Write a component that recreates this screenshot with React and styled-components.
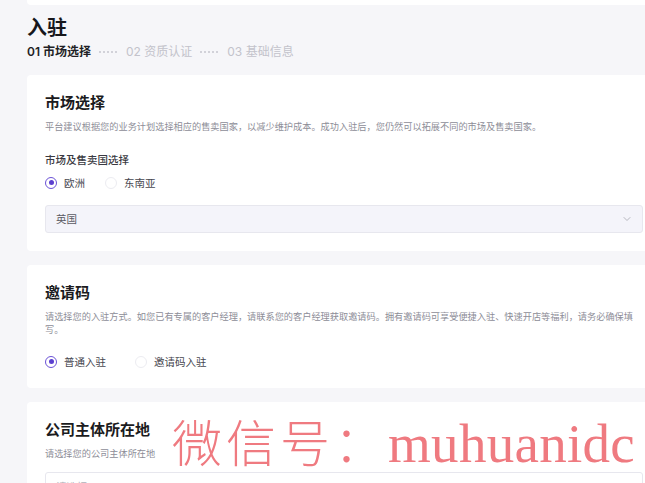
import React from "react";
import styled, { createGlobalStyle } from "styled-components";
import { ChevronDown } from "lucide-react";

const GlobalStyle = createGlobalStyle`
    html, body {
        margin: 0;
        padding: 0;
        background: #f6f6f9;
        overflow: hidden;
    }
    body {
        font-family: Inter, "Noto Sans CJK SC", sans-serif;
        color: #1f1f24;
    }
`;

const Page = styled.div`
    position: relative;
    width: 645px;
    height: 483px;
    overflow: hidden;
`;

const Column = styled.div`
    margin-left: 27px;
    width: 634px;
`;

const TopStub = styled.div`
    height: 5px;
    background: #fff;
    border-radius: 0 0 4px 4px;
`;

const Title = styled.h1`
    margin: 11px 0 0;
    font-size: 20px;
    line-height: 24px;
    font-weight: 700;
    color: #17171c;
`;

const Steps = styled.div`
    display: flex;
    align-items: center;
    margin-top: 4px;
    height: 16px;
`;

const Step = styled.span`
    font-size: 12px;
    line-height: 16px;
    font-weight: ${(p) => (p.$active ? 600 : 400)};
    color: ${(p) => (p.$active ? "#1f1f26" : "#c3c3cb")};
`;

const Dots = styled.span`
    width: 21px;
    height: 2px;
    margin: 0 7px;
    background: radial-gradient(circle, #d2d2d9 0.9px, transparent 1.1px) 0 0 / 4px 2px repeat-x;
`;

const Cards = styled.div`
    display: flex;
    flex-direction: column;
    gap: 14px;
    margin-top: 15px;
`;

const Card = styled.section`
    background: #fff;
    border-radius: 4px;
    padding: 18px 18px 18px;
`;

const CardTitle = styled.h2`
    margin: 0;
    font-size: 15px;
    line-height: 20px;
    font-weight: 700;
    color: #1b1b20;
`;

const Desc = styled.p`
    margin: 7px 0 0;
    font-size: 9.2px;
    line-height: 13.5px;
    color: #8d8d97;
`;

const Label = styled.div`
    margin-top: 19px;
    font-size: 10.5px;
    line-height: 15px;
    font-weight: 500;
    color: #3a3a42;
`;

const RadioRow = styled.div`
    display: flex;
    align-items: center;
    gap: ${(p) => p.$gap}px;
    margin-top: ${(p) => p.$top}px;
    height: 16px;
`;

const Option = styled.label`
    display: flex;
    align-items: center;
    gap: 7px;
    font-size: 10.5px;
    color: #47474f;
`;

const Circle = styled.span`
    box-sizing: border-box;
    width: 12px;
    height: 12px;
    border-radius: 50%;
    border: 1px solid ${(p) => (p.$checked ? "#6b52d6" : "#ececf1")};
    display: flex;
    align-items: center;
    justify-content: center;

    &::after {
        content: "";
        width: 5px;
        height: 5px;
        border-radius: 50%;
        background: ${(p) => (p.$checked ? "#5b40cf" : "transparent")};
    }
`;

const Select = styled.div`
    box-sizing: border-box;
    display: flex;
    align-items: center;
    justify-content: space-between;
    height: 28px;
    margin-top: ${(p) => p.$top}px;
    padding: 0 9px 0 10px;
    border: 1px solid #e7e7ee;
    border-radius: 3px;
    background: ${(p) => (p.$filled ? "#f4f4fa" : "#fff")};
    font-size: 10.5px;
    color: ${(p) => (p.$filled ? "#5a5a63" : "#b0b0b8")};

    svg {
        color: #a6a6ae;
    }
`;

const Watermark = styled.div`
    position: absolute;
    left: 172px;
    top: 413px;
    display: flex;
    align-items: baseline;
    line-height: 54px;
    color: #ef7a80;
    white-space: nowrap;
    pointer-events: none;
`;

const MarkCjk = styled.span`
    font-family: "Noto Sans CJK SC", sans-serif;
    font-weight: 300;
    font-size: 50px;
    letter-spacing: 4px;
`;

const MarkLatin = styled.span`
    font-family: "Liberation Serif", serif;
    font-size: 55px;
    letter-spacing: 0.3px;
`;

const Radio = ({ checked, children }) => (
    <Option>
        <Circle $checked={checked} />
        {children}
    </Option>
);

export default function App() {
    return (
        <Page>
            <GlobalStyle />
            <Column>
                <TopStub />
                <Title>入驻</Title>
                <Steps>
                    <Step $active>01 市场选择</Step>
                    <Dots />
                    <Step>02 资质认证</Step>
                    <Dots />
                    <Step>03 基础信息</Step>
                </Steps>

                <Cards>
                    <Card>
                        <CardTitle>市场选择</CardTitle>
                        <Desc>
                            平台建议根据您的业务计划选择相应的售卖国家，以减少维护成本。成功入驻后，您仍然可以拓展不同的市场及售卖国家。
                        </Desc>
                        <Label>市场及售卖国选择</Label>
                        <RadioRow $gap={20} $top={7}>
                            <Radio checked>欧洲</Radio>
                            <Radio>东南亚</Radio>
                        </RadioRow>
                        <Select $filled $top={14}>
                            英国
                            <ChevronDown size={12} strokeWidth={1.6} />
                        </Select>
                    </Card>

                    <Card>
                        <CardTitle>邀请码</CardTitle>
                        <Desc>
                            请选择您的入驻方式。如您已有专属的客户经理，请联系您的客户经理获取邀请码。拥有邀请码可享受便捷入驻、快速开店等福利，请务必确保填写。
                        </Desc>
                        <RadioRow $gap={29} $top={17}>
                            <Radio checked>普通入驻</Radio>
                            <Radio>邀请码入驻</Radio>
                        </RadioRow>
                    </Card>

                    <Card>
                        <CardTitle>公司主体所在地</CardTitle>
                        <Desc>请选择您的公司主体所在地</Desc>
                        <Select $top={12}>
                            请选择
                            <ChevronDown size={12} strokeWidth={1.6} />
                        </Select>
                    </Card>
                </Cards>
            </Column>

            <Watermark>
                <MarkCjk>微信号：</MarkCjk>
                <MarkLatin>muhuanidc</MarkLatin>
            </Watermark>
        </Page>
    );
}
